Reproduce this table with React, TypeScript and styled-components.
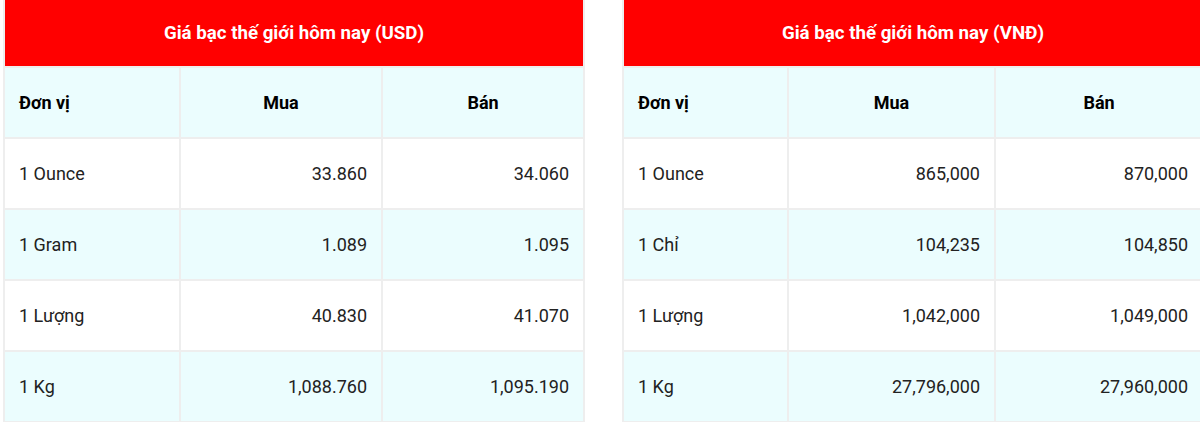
import React from "react";
import styled, { createGlobalStyle } from "styled-components";

type Row = {
  unit: string;
  buy: string;
  sell: string;
};

type PriceTableProps = {
  title: string;
  widths: number[];
  rows: Row[];
};

const GlobalStyle = createGlobalStyle`
  html, body {
    margin: 0;
    padding: 0;
    background: #ffffff;
  }
  body {
    width: 1200px;
    height: 422px;
    overflow: hidden;
    font-family: "Roboto", "Liberation Sans", sans-serif;
  }
`;

const usdRows: Row[] = [
  { unit: "1 Ounce", buy: "33.860", sell: "34.060" },
  { unit: "1 Gram", buy: "1.089", sell: "1.095" },
  { unit: "1 Lượng", buy: "40.830", sell: "41.070" },
  { unit: "1 Kg", buy: "1,088.760", sell: "1,095.190" },
];

const vndRows: Row[] = [
  { unit: "1 Ounce", buy: "865,000", sell: "870,000" },
  { unit: "1 Chỉ", buy: "104,235", sell: "104,850" },
  { unit: "1 Lượng", buy: "1,042,000", sell: "1,049,000" },
  { unit: "1 Kg", buy: "27,796,000", sell: "27,960,000" },
];

const PriceTable = ({ title, widths, rows }: PriceTableProps) => (
  <Table>
    <colgroup>
      {widths.map((w, i) => (
        <col key={i} style={{ width: w }} />
      ))}
    </colgroup>
    <thead>
      <tr>
        <TitleCell colSpan={3}>{title}</TitleCell>
      </tr>
      <HeadRow>
        <HeadCell align="left">Đơn vị</HeadCell>
        <HeadCell align="center">Mua</HeadCell>
        <HeadCell align="center">Bán</HeadCell>
      </HeadRow>
    </thead>
    <tbody>
      {rows.map((r, i) => (
        <BodyRow key={r.unit} striped={i % 2 === 1}>
          <Cell align="left">{r.unit}</Cell>
          <Cell align="right">{r.buy}</Cell>
          <Cell align="right">{r.sell}</Cell>
        </BodyRow>
      ))}
    </tbody>
  </Table>
);

const App = () => (
  <>
    <GlobalStyle />
    <Page>
      <PriceTable
        title="Giá bạc thế giới hôm nay (USD)"
        widths={[176, 202, 202]}
        rows={usdRows}
      />
      <PriceTable
        title="Giá bạc thế giới hôm nay (VNĐ)"
        widths={[165, 207, 208]}
        rows={vndRows}
      />
    </Page>
  </>
);

const Page = styled.div`
  display: flex;
  gap: 37px;
  padding-left: 3px;
  width: 1240px;
`;

const Table = styled.table`
  width: 581px;
  flex-shrink: 0;
  border-collapse: collapse;
  table-layout: fixed;
`;

const TitleCell = styled.th`
  height: 66px;
  padding: 0;
  border: 2px solid #eeeeee;
  border-top: 0;
  border-bottom: 0;
  background: #ff0000;
  color: #ffffff;
  font-size: 18.7px;
  font-weight: 700;
  text-align: center;
  vertical-align: middle;
`;

const HeadRow = styled.tr`
  background: #ebfdfe;
`;

const HeadCell = styled.th<{ align: "left" | "center" }>`
  height: 69px;
  padding: 0 14px;
  border: 2px solid #eeeeee;
  color: #000000;
  font-size: 18px;
  font-weight: 700;
  text-align: ${({ align }) => align};
  vertical-align: middle;
`;

const BodyRow = styled.tr<{ striped: boolean }>`
  background: ${({ striped }) => (striped ? "#ebfdfe" : "#ffffff")};
`;

const Cell = styled.td<{ align: "left" | "right" }>`
  height: 69px;
  padding: 0 14px;
  border: 2px solid #eeeeee;
  color: #222222;
  font-size: 18px;
  text-align: ${({ align }) => align};
  vertical-align: middle;
`;

export default App;
